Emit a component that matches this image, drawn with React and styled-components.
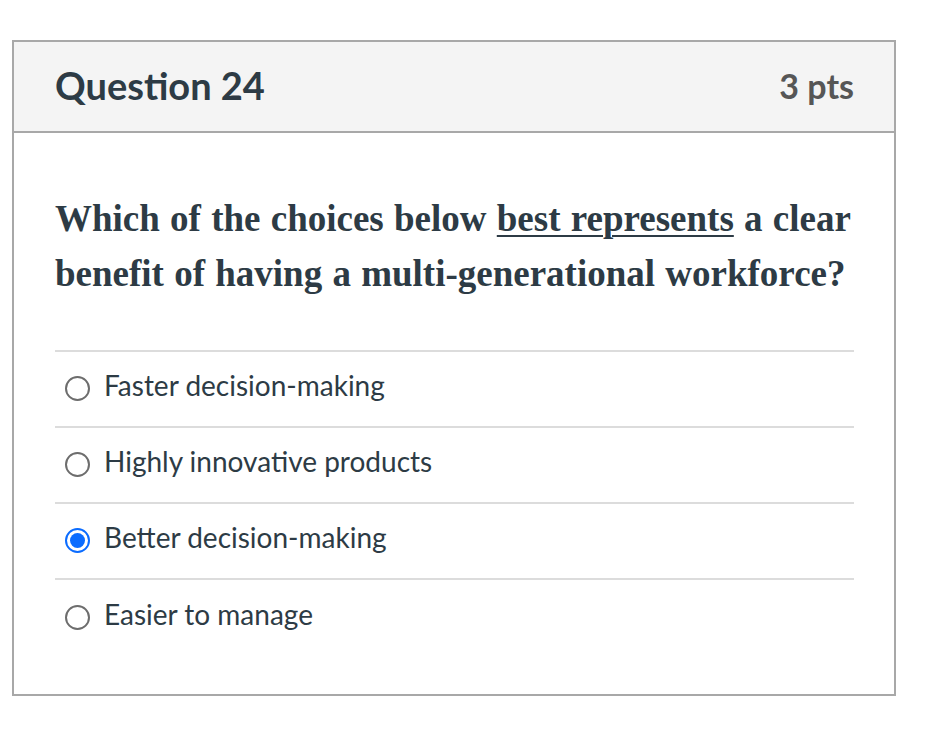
import React from "react";
import styled, { createGlobalStyle } from "styled-components";

const Global = createGlobalStyle`
	body {
		margin: 0;
		background: #ffffff;
	}
`;

const Page = styled.div`
	padding: 40px 0 0 12px;
	width: 950px;
	height: 744px;
	box-sizing: border-box;
`;

const Card = styled.div`
	width: 884px;
	border: 2px solid #a8a8a8;
	box-sizing: border-box;
	font-family: Lato, "Liberation Sans", sans-serif;
`;

const Header = styled.div`
	display: flex;
	justify-content: space-between;
	align-items: center;
	height: 91px;
	padding: 0 40px 3px 41px;
	box-sizing: border-box;
	background: #f4f4f4;
	border-bottom: 2px solid #a8a8a8;
`;

const Title = styled.h2`
	margin: 0;
	font-size: 38px;
	font-weight: 700;
	color: #2d3b45;
`;

const Points = styled.div`
	font-size: 34px;
	font-weight: 700;
	color: #565656;
`;

const Body = styled.div`
	padding: 58px 40px 38px 41px;
`;

const Prompt = styled.p`
	margin: 0 0 49px;
	font-family: "Liberation Serif", "Times New Roman", serif;
	font-size: 37px;
	font-weight: 700;
	line-height: 55px;
	word-spacing: 1px;
	color: #2d3b45;

	u {
		text-decoration-thickness: 2px;
		text-underline-offset: 4px;
	}
`;

const Answers = styled.div`
	border-top: 2px solid #dcdcdc;
`;

const Answer = styled.label`
	display: flex;
	align-items: center;
	gap: 14px;
	height: 76px;
	padding: 0 0 8px 10px;
	box-sizing: border-box;
	border-bottom: ${props => (props.last ? "none" : "2px solid #dcdcdc")};
	font-size: 28px;
	color: #2d3b45;
`;

const Radio = styled.span`
	width: 25px;
	height: 25px;
	margin-top: 7px;
	box-sizing: border-box;
	border-radius: 50%;
	border: 2px solid ${props => (props.checked ? "#0b6cff" : "#6d6d6d")};
	display: flex;
	justify-content: center;
	align-items: center;

	&::after {
		content: "";
		display: ${props => (props.checked ? "block" : "none")};
		width: 15px;
		height: 15px;
		border-radius: 50%;
		background: #0b6cff;
	}
`;

const answers = [
	"Faster decision-making",
	"Highly innovative products",
	"Better decision-making",
	"Easier to manage",
];

const App = () => {
	const selected = 2;
	return (
		<Page>
			<Global />
			<Card>
				<Header>
					<Title>Question 24</Title>
					<Points>3 pts</Points>
				</Header>
				<Body>
					<Prompt>
						Which of the choices below <u>best represents</u> a clear benefit of
						having a multi-generational workforce?
					</Prompt>
					<Answers>
						{answers.map((text, i) => (
							<Answer key={text} last={i === answers.length - 1}>
								<Radio checked={i === selected} />
								{text}
							</Answer>
						))}
					</Answers>
				</Body>
			</Card>
		</Page>
	);
};

export default App;
